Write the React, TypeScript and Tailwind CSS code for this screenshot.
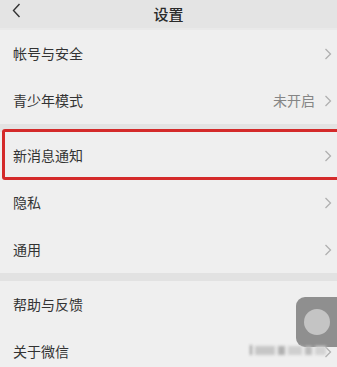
import React from "react";

const Chevron = () => (
  <svg width="8" height="12" viewBox="0 0 8 12" className="shrink-0">
    <path d="M1.5 1 L6.5 6 L1.5 11" fill="none" stroke="#b0b0b0" strokeWidth="1.3" />
  </svg>
);

function Row({ label, value }: { label: string; value?: string }) {
  return (
    <div className="flex h-[47px] items-center justify-between pl-[13px] pr-[5px]">
      <span className="text-[14px] text-[#333333]">{label}</span>
      <div className="flex items-center gap-[9px]">
        {value && <span className="text-[14px] text-[#858585]">{value}</span>}
        <Chevron />
      </div>
    </div>
  );
}

export default function App() {
  return (
    <div
      className="relative h-[367px] w-[337px] overflow-hidden bg-[#efefef]"
      style={{ fontFamily: '"Noto Sans CJK SC", "Noto Sans", sans-serif' }}
    >
      <div className="relative flex h-[28px] items-center justify-center bg-[#e4e4e4]">
        <svg width="9" height="15" viewBox="0 0 9 15" className="absolute left-[12px] top-[3px]">
          <path d="M7.5 1 L1.5 7.5 L7.5 14" fill="none" stroke="#333333" strokeWidth="1.4" />
        </svg>
        <span className="text-[15px] font-medium text-[#2a2a2a]">设置</span>
      </div>
      <div className="h-[2px] bg-[#e9e9e9]" />
      <Row label="帐号与安全" />
      <Row label="青少年模式" value="未开启" />
      <div className="h-[8px] bg-[#e3e3e3]" />
      <div className="relative">
        <div className="absolute left-[2px] right-[-4px] top-[-3px] bottom-[-1px] rounded-[3px] border-[3px] border-[#d42a2a]" />
        <Row label="新消息通知" />
      </div>
      <Row label="隐私" />
      <Row label="通用" />
      <div className="h-[8px] bg-[#e2e2e2]" />
      <Row label="帮助与反馈" />
      <Row label="关于微信" />

      <div className="absolute left-[296px] top-[297px] flex h-[50px] w-[50px] items-center justify-center rounded-[9px] bg-[#8f8f8f]">
        <div className="mr-[8px] h-[26px] w-[26px] rounded-full bg-[#c4c4c4]" />
      </div>
      <div className="absolute left-[250px] top-[344px] flex h-[12px] w-[76px] items-center gap-[3px] blur-[1.5px]">
        <div className="h-[10px] w-[2px] bg-[#9a9a9a]" />
        <div className="h-[9px] w-[22px] bg-[#c6c6c6]" />
        <div className="h-[9px] w-[8px] bg-[#b0b0b0]" />
        <div className="h-[9px] w-[16px] bg-[#cfcfcf]" />
        <div className="h-[9px] w-[8px] bg-[#bcbcbc]" />
        <div className="h-[9px] w-[12px] bg-[#d2d2d2]" />
      </div>
    </div>
  );
}
